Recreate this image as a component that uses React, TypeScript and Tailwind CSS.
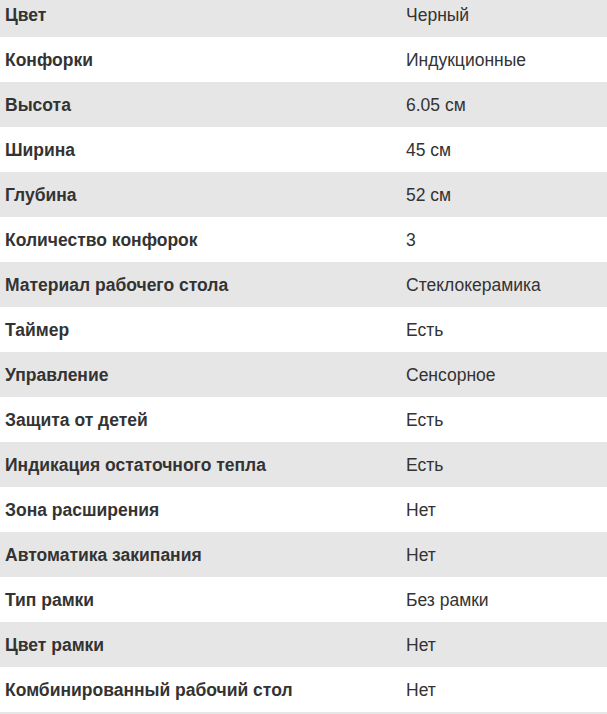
import React from "react";

const SPECS: [string, string][] = [
  ["Цвет", "Черный"],
  ["Конфорки", "Индукционные"],
  ["Высота", "6.05 см"],
  ["Ширина", "45 см"],
  ["Глубина", "52 см"],
  ["Количество конфорок", "3"],
  ["Материал рабочего стола", "Стеклокерамика"],
  ["Таймер", "Есть"],
  ["Управление", "Сенсорное"],
  ["Защита от детей", "Есть"],
  ["Индикация остаточного тепла", "Есть"],
  ["Зона расширения", "Нет"],
  ["Автоматика закипания", "Нет"],
  ["Тип рамки", "Без рамки"],
  ["Цвет рамки", "Нет"],
  ["Комбинированный рабочий стол", "Нет"],
];

export default function App() {
  return (
    <div className="w-[607px] h-[714px] overflow-hidden bg-white font-['Liberation_Sans',Arial,sans-serif] text-[17.5px] leading-none text-[#333]">
      <div className="-mt-2">
        {SPECS.map(([label, value], idx) => (
          <div
            key={label}
            className={`grid grid-cols-[401px_1fr] h-[45px] items-center ${
              idx % 2 === 0 ? "bg-[#e6e6e6]" : "bg-white"
            }`}
          >
            <div className="pl-[5px] pt-[3px] font-bold">{label}</div>
            <div className="pl-[5px] pt-[3px]">{value}</div>
          </div>
        ))}
        <div className="h-[45px] bg-[#e6e6e6]" />
      </div>
    </div>
  );
}
